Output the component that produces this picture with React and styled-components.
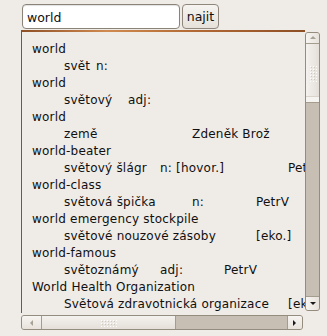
import React from "react";
import styled, { createGlobalStyle } from "styled-components";

const GlobalStyle = createGlobalStyle`
  html, body {
    margin: 0;
    background: #efebe7;
  }
  body {
    font-family: "DejaVu Sans", Verdana, sans-serif;
    font-size: 12px;
    color: #101010;
  }
`;

const entries = [
  "world",
  "\tsvět\tn:",
  "world",
  "\tsvětový\tadj:",
  "world",
  "\tzemě\t\t\tZdeněk Brož",
  "world-beater",
  "\tsvětový šlágr\tn: [hovor.]\t\tPetrV",
  "world-class",
  "\tsvětová špička\t\tn:\t\tPetrV",
  "world emergency stockpile",
  "\tsvětové nouzové zásoby\t\t[eko.]",
  "world-famous",
  "\tsvětoznámý\tadj:\t\tPetrV",
  "World Health Organization",
  "\tSvětová zdravotnická organizace\t[eko.]",
];

export default function App() {
  return (
    <>
      <GlobalStyle />
      <Window>
        <SearchRow>
          <SearchInput defaultValue="world" />
          <FindButton>najit</FindButton>
        </SearchRow>
        <ScrollArea>
          <Viewport>
            {entries.map((line, i) => (
              <Line key={i}>{line}</Line>
            ))}
          </Viewport>
          <VScroll>
            <ArrowButton $vertical>
              <Arrow dir="up" disabled />
            </ArrowButton>
            <VThumb>
              <Grip $cols={3} $rows={6} />
            </VThumb>
            <Trough />
            <ArrowButton $vertical $end>
              <Arrow dir="down" />
            </ArrowButton>
          </VScroll>
          <HScroll>
            <ArrowButton>
              <Arrow dir="left" disabled />
            </ArrowButton>
            <HThumb>
              <Grip $cols={6} $rows={3} />
            </HThumb>
            <Trough />
            <ArrowButton $end>
              <Arrow dir="right" />
            </ArrowButton>
          </HScroll>
        </ScrollArea>
      </Window>
    </>
  );
}

const Window = styled.div`
  padding: 4px 0 0 21px;
`;

const SearchRow = styled.div`
  display: flex;
  gap: 2px;
  margin-left: 1px;
  height: 25px;
`;

const SearchInput = styled.input`
  box-sizing: border-box;
  width: 158px;
  height: 25px;
  margin: 0;
  padding: 1px 4px 0;
  border: 1px solid #8a8378;
  border-radius: 4px;
  background: #ffffff;
  box-shadow: inset 0 1px 1px rgba(0, 0, 0, 0.12);
  font-family: "DejaVu Sans", Verdana, sans-serif;
  font-size: 12.5px;
  color: #101010;
  outline: none;
`;

const FindButton = styled.button`
  box-sizing: border-box;
  width: 37px;
  height: 25px;
  margin: 0;
  padding: 0;
  border: 1px solid #8f877b;
  border-radius: 4px;
  background: linear-gradient(#f6f4f1, #e6e1da);
  font-family: "DejaVu Sans", Verdana, sans-serif;
  font-size: 12.5px;
  color: #101010;
`;

const ScrollArea = styled.div`
  display: grid;
  grid-template-columns: 284px 16px;
  grid-template-rows: 283px 17px;
  margin-top: 1px;
`;

const Viewport = styled.div`
  box-sizing: border-box;
  overflow: hidden;
  border-top: 2px solid #a55a28;
  border-image: linear-gradient(90deg, #8e4f25, #d08a4f 30%, #b36a35 60%, #8e4f25) 1;
  border-left: 1px solid #9d9589;
  border-right: 0;
  border-bottom: 0;
  padding: 9px 0 0 10px;
`;

const Line = styled.div`
  white-space: pre;
  tab-size: 32px;
  height: 17px;
  line-height: 17px;
  font-size: 12px;
  letter-spacing: 0.2px;
`;

const VScroll = styled.div`
  display: flex;
  flex-direction: column;
  box-sizing: border-box;
  width: 15px;
  margin: 2px 0 2px 0;
  border: 1px solid #958c80;
  border-radius: 3px;
  overflow: hidden;
  background: #c7bfb4;
`;

const HScroll = styled.div`
  display: flex;
  box-sizing: border-box;
  width: 282px;
  height: 15px;
  margin-top: 2px;
  border: 1px solid #958c80;
  border-radius: 3px;
  overflow: hidden;
  background: #c7bfb4;
`;

const Trough = styled.div`
  flex: 1;
`;

const ArrowButton = styled.div`
  display: flex;
  align-items: center;
  justify-content: center;
  flex: none;
  background: linear-gradient(${(p) => (p.$vertical ? "90deg" : "180deg")}, #f7f5f2, #e7e2db);
  ${(p) =>
    p.$vertical
      ? `height: ${p.$end ? 13 : 10}px; border-${p.$end ? "top" : "bottom"}: 1px solid #a59c90;`
      : `width: ${p.$end ? 14 : 19}px; border-${p.$end ? "left" : "right"}: 1px solid #a59c90;`}
`;

const VThumb = styled.div`
  display: flex;
  align-items: center;
  justify-content: center;
  flex: none;
  height: 58px;
  border-bottom: 1px solid #a59c90;
  background: linear-gradient(90deg, #f4f2ef, #e4dfd8);
  box-shadow: inset 0 -5px 0 #f6f4f1, inset 0 -6px 0 #d9d3cb;
`;

const HThumb = styled.div`
  display: flex;
  align-items: center;
  justify-content: center;
  flex: none;
  width: 133px;
  border-right: 1px solid #a59c90;
  background: linear-gradient(#f4f2ef, #e4dfd8);
`;

const Grip = styled.div`
  width: ${(p) => p.$cols * 3 - 1}px;
  height: ${(p) => p.$rows * 3 - 1}px;
  background-image: radial-gradient(circle, #ffffff 0.8px, transparent 1px),
    radial-gradient(circle, #cfc8bf 0.8px, transparent 1px);
  background-size: 3px 3px;
  background-position: 0 0, 1px 1px;
`;

function Arrow({ dir, disabled }) {
  const shapes = {
    up: "1,5 4,2 7,5",
    down: "1,2 4,5 7,2",
    left: "5,1 2,4 5,7",
    right: "2,1 5,4 2,7",
  };
  return (
    <svg width="8" height="8" viewBox="0 0 8 8">
      <polygon points={shapes[dir]} fill={disabled ? "#a8a196" : "#1a1a1a"} />
    </svg>
  );
}
